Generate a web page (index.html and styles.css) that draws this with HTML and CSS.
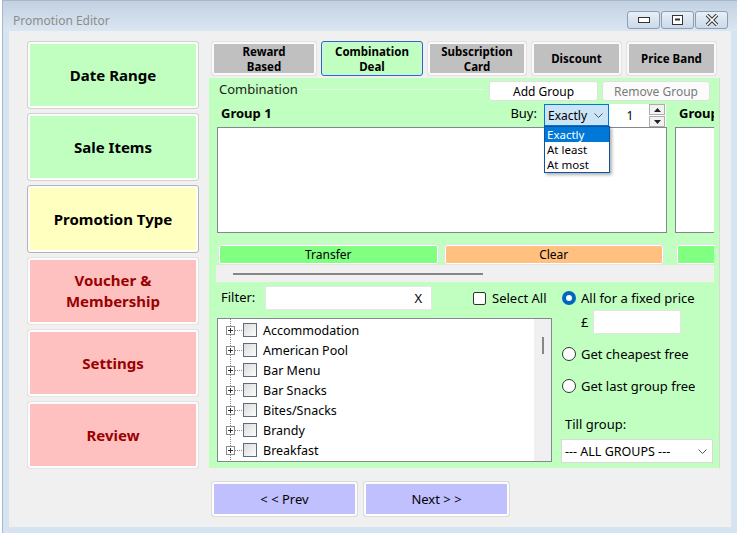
FILE: index.html
```html
<!DOCTYPE html>
<html lang="en">
  <head>
    <meta charset="UTF-8" />
    <meta name="viewport" content="width=device-width, initial-scale=1.0" />
    <title>Promotion Editor</title>
    <link rel="stylesheet" href="styles.css">
  </head>
  <body>
    <div class="window">
      <div class="titlebar">
        <span class="title">Promotion Editor</span>
        <div class="caption-btns">
          <span class="cap-btn">
            <svg width="12" height="6" viewBox="0 0 12 6"><rect x="0.5" y="0.5" width="11" height="5" fill="#fff" stroke="#333" /></svg>
          </span>
          <span class="cap-btn">
            <svg width="11" height="10" viewBox="0 0 11 10"><rect x="0.5" y="0.5" width="10" height="9" fill="#fff" stroke="#333" /><rect x="3" y="3.5" width="5" height="2" fill="#333" /></svg>
          </span>
          <span class="cap-btn">
            <svg width="14" height="12" viewBox="0 0 14 12">
              <path d="M2 1 L12 11 M12 1 L2 11" stroke="#333" stroke-width="3.6" />
              <path d="M2 1 L12 11 M12 1 L2 11" stroke="#fff" stroke-width="1.6" />
            </svg>
          </span>
        </div>
      </div>

      <div class="client">
        <nav class="steps">
          <div class="step green">Date Range</div>
          <div class="step green">Sale Items</div>
          <div class="step yellow current">Promotion Type</div>
          <div class="step pink">Voucher &amp;<br>Membership</div>
          <div class="step pink">Settings</div>
          <div class="step pink">Review</div>
        </nav>

        <div class="editor">
          <div class="tabs">
            <div class="tab w1">Reward<br>Based</div>
            <div class="tab w2 active">Combination<br>Deal</div>
            <div class="tab w3">Subscription<br>Card</div>
            <div class="tab w4">Discount</div>
            <div class="tab w5">Price Band</div>
          </div>

          <div class="panel">
            <div class="gb-head">
              <span class="legend">Combination</span>
              <span class="gb-line"></span>
              <span class="btn-white">Add Group</span>
              <span class="btn-white disabled">Remove Group</span>
            </div>

            <div class="groups">
              <div class="group">
                <div class="group-head">
                  <span class="group-name">Group 1</span>
                  <span class="buy">Buy:</span>
                  <div class="combo open">
                    <span>Exactly</span>
                    <svg width="9" height="5" viewBox="0 0 9 5"><path d="M0.5 0.5 L4.5 4.5 L8.5 0.5" fill="none" stroke="#555" /></svg>
                    <ul class="dropdown">
                      <li class="sel">Exactly</li>
                      <li>At least</li>
                      <li>At most</li>
                    </ul>
                  </div>
                  <div class="spin">
                    <span class="spin-val">1</span>
                    <span class="spin-btns">
                      <span class="arr"><svg width="7" height="4" viewBox="0 0 7 4"><path d="M0 4 L3.5 0 L7 4 Z" fill="#222" /></svg></span>
                      <span class="arr"><svg width="7" height="4" viewBox="0 0 7 4"><path d="M0 0 L3.5 4 L7 0 Z" fill="#222" /></svg></span>
                    </span>
                  </div>
                </div>
                <div class="group-box"></div>
                <div class="group-btns">
                  <span class="act transfer">Transfer</span>
                  <span class="act clear">Clear</span>
                </div>
              </div>

              <div class="group">
                <div class="group-head">
                  <span class="group-name">Group 2</span>
                </div>
                <div class="group-box"></div>
                <div class="group-btns">
                  <span class="act transfer">Transfer</span>
                  <span class="act clear">Clear</span>
                </div>
              </div>
            </div>

            <div class="hscroll"><span class="hthumb"></span></div>

            <div class="lower">
              <div class="items">
                <div class="filter-row">
                  <span class="filter-label">Filter:</span>
                  <div class="filter-input"><span>X</span></div>
                  <span class="check"></span>
                  <span class="check-label">Select All</span>
                </div>
                <div class="tree">
                  <ul class="tree-list">
                    <li><span class="plus"></span><span class="dots"></span><span class="check tree-check"></span>Accommodation</li>
                    <li><span class="plus"></span><span class="dots"></span><span class="check tree-check"></span>American Pool</li>
                    <li><span class="plus"></span><span class="dots"></span><span class="check tree-check"></span>Bar Menu</li>
                    <li><span class="plus"></span><span class="dots"></span><span class="check tree-check"></span>Bar Snacks</li>
                    <li><span class="plus"></span><span class="dots"></span><span class="check tree-check"></span>Bites/Snacks</li>
                    <li><span class="plus"></span><span class="dots"></span><span class="check tree-check"></span>Brandy</li>
                    <li><span class="plus"></span><span class="dots"></span><span class="check tree-check"></span>Breakfast</li>
                  </ul>
                  <div class="vscroll"><span class="vthumb"></span></div>
                </div>
              </div>

              <div class="options">
                <div class="radio-row">
                  <span class="radio on"></span>
                  <span>All for a fixed price</span>
                </div>
                <div class="price-row">
                  <span>£</span>
                  <span class="price-input"></span>
                </div>
                <div class="radio-row r2">
                  <span class="radio"></span>
                  <span>Get cheapest free</span>
                </div>
                <div class="radio-row r3">
                  <span class="radio"></span>
                  <span>Get last group free</span>
                </div>
                <div class="till-label">Till group:</div>
                <div class="till-select">
                  <span>--- ALL GROUPS ---</span>
                  <svg width="9" height="5" viewBox="0 0 9 5"><path d="M0.5 0.5 L4.5 4.5 L8.5 0.5" fill="none" stroke="#555" /></svg>
                </div>
              </div>
            </div>
          </div>

          <div class="pager">
            <span class="page-btn">&lt; &lt; Prev</span>
            <span class="page-btn">Next &gt; &gt;</span>
          </div>
        </div>
      </div>
    </div>
  </body>
</html>
```

FILE: styles.css
```css
body {
  margin: 0;
  background-color: #ffffff;
  font-family: "Noto Sans", "Open Sans", sans-serif;
  font-size: 12px;
  color: #000;
}
.window {
  margin: 0 0 0 2px;
  width: 735px;
  height: 533px;
  box-sizing: border-box;
  border: 1px solid #a9b8c9;
  border-right: none;
  border-bottom: none;
  background-color: #d6e3f1;
  padding: 0 6px 6px 6px;
}
.titlebar {
  height: 30px;
  display: flex;
  align-items: flex-start;
  background: linear-gradient(#c2d1e1, #dbe6f2);
  margin: 0 -6px;
  padding: 0 9px 0 10px;
}
.title {
  margin-top: 11px;
  color: #8c8c8c;
  font-size: 12px;
  flex: 1;
}
.caption-btns {
  display: flex;
  margin-top: 10px;
}
.cap-btn {
  width: 31px;
  height: 16px;
  border: 1px solid #8a9fb6;
  border-radius: 3px;
  background: linear-gradient(#e9f0f7, #cbd9e8);
  display: flex;
  align-items: center;
  justify-content: center;
  margin-left: 1px;
}
.client {
  height: 496px;
  box-sizing: border-box;
  background-color: #f0f0f0;
  display: flex;
  padding: 10px 10px 0 18px;
  gap: 10px;
}

/* steps on the left */
.steps {
  width: 172px;
  display: flex;
  flex-direction: column;
  gap: 4px;
}
.step {
  height: 68px;
  box-sizing: border-box;
  border: 1px solid #e4e4e4;
  border-radius: 3px;
  box-shadow: inset 0 0 0 2px #fdfdfd;
  display: flex;
  align-items: center;
  justify-content: center;
  text-align: center;
  font-weight: bold;
  font-size: 15px;
  line-height: 21px;
}
.step.green {
  background-color: #c0ffc0;
  border-color: #d2d2d2;
}
.step.yellow {
  background-color: #ffffc0;
  border-color: #b4b4b4;
}
.step.pink {
  background-color: #ffc0c0;
  color: #9a0000;
}

/* editor */
.editor {
  width: 511px;
  display: flex;
  flex-direction: column;
}
.tabs {
  display: flex;
  gap: 4px;
  padding-left: 2px;
  height: 35px;
}
.tab {
  box-sizing: border-box;
  height: 35px;
  border: 1px solid #e2e2e2;
  border-radius: 3px;
  box-shadow: inset 0 0 0 2px #fafafa;
  background-color: #c0c0c0;
  display: flex;
  align-items: center;
  justify-content: center;
  text-align: center;
  font-weight: bold;
  font-size: 11.5px;
  line-height: 15px;
}
.tab.w1 { width: 106px; }
.tab.w2 { width: 102px; }
.tab.w3 { width: 100px; }
.tab.w4 { width: 91px; }
.tab.w5 { width: 91px; }
.tab.active {
  background-color: #c0ffc0;
  border-color: #2b6cb0;
  box-shadow: inset 0 0 0 1px #d7ecfa;
}
.panel {
  margin-top: 2px;
  height: 390px;
  box-sizing: border-box;
  background-color: #c0ffc0;
  border-right: 1px solid #d4dcd4;
  padding-top: 3px;
  position: relative;
}
.gb-head {
  display: flex;
  align-items: flex-start;
  height: 20px;
  padding: 0 9px 0 10px;
}
.legend {
  font-size: 13px;
  line-height: 16px;
  color: #222;
}
.gb-line {
  flex: 1;
  border-top: 1px solid #e6f8e6;
  margin: 8px 6px 0 5px;
}
.btn-white {
  box-sizing: border-box;
  height: 20px;
  width: 109px;
  background: #fff;
  border: 1px solid #e0e0e0;
  border-radius: 3px;
  display: flex;
  align-items: center;
  justify-content: center;
  font-size: 12px;
}
.btn-white + .btn-white {
  margin-left: 4px;
  width: 108px;
}
.btn-white.disabled {
  color: #7a7a7a;
  background: #fbfbfb;
}

.groups {
  margin: 3px 0 0 7px;
  width: 498px;
  display: flex;
  gap: 8px;
  padding-left: 1px;
  box-sizing: border-box;
  overflow: hidden;
}
.group {
  flex: 0 0 450px;
}
.group-head {
  height: 23px;
  display: flex;
  align-items: flex-start;
}
.group-name {
  font-weight: bold;
  font-size: 13px;
  line-height: 18px;
  margin: 0 0 0 4px;
  flex: 1;
}
.buy {
  font-size: 13px;
  margin: 0 7px 0 0;
}
.combo {
  position: relative;
  box-sizing: border-box;
  width: 65px;
  height: 22px;
  border: 1px solid #0078d7;
  background-color: #cce4f7;
  display: flex;
  align-items: center;
  justify-content: space-between;
  padding: 0 5px 0 3px;
}
.combo span {
  font-size: 12px;
}
.dropdown {
  position: absolute;
  top: 21px;
  left: -1px;
  width: 66px;
  box-sizing: border-box;
  margin: 0;
  padding: 0;
  list-style: none;
  background: #fff;
  border: 1px solid #0f52a0;
  box-shadow: 2px 2px 3px rgba(0, 0, 0, 0.3);
  z-index: 5;
}
.dropdown li {
  height: 15px;
  line-height: 15px;
  padding-left: 2px;
  font-size: 11.5px;
  overflow: hidden;
}
.dropdown li.sel {
  background-color: #0078d7;
  color: #fff;
}
.spin {
  box-sizing: border-box;
  width: 57px;
  height: 23px;
  background: #fff;
  display: flex;
  align-items: center;
  margin-right: 1px;
}
.spin-val {
  flex: 1;
  text-align: center;
  font-size: 12px;
  padding-left: 2px;
}
.spin-btns {
  display: flex;
  flex-direction: column;
  gap: 1px;
  margin-right: 1px;
}
.arr {
  width: 14px;
  height: 9px;
  border: 1px solid #adadad;
  background: #f2f2f2;
  display: flex;
  align-items: center;
  justify-content: center;
}
.group-box {
  height: 106px;
  box-sizing: border-box;
  border: 1px solid #828790;
  background: #fff;
}
.group-btns {
  display: flex;
  gap: 5px;
  margin-top: 11px;
  padding-left: 1px;
  padding-right: 3px;
}
.act {
  flex: 1;
  box-sizing: border-box;
  height: 21px;
  border: 1px solid #e4e4e4;
  border-radius: 3px;
  box-shadow: inset 0 0 0 1px #fff;
  display: flex;
  align-items: center;
  justify-content: center;
  font-size: 12px;
}
.act.transfer {
  background-color: #80ff80;
}
.act.clear {
  background-color: #ffc080;
}
.hscroll {
  margin-left: 7px;
  width: 498px;
  height: 17px;
  background: #f0f0f0;
  display: flex;
  align-items: center;
}
.hthumb {
  display: block;
  margin-left: 17px;
  width: 250px;
  height: 2px;
  background: #868686;
}

.lower {
  display: flex;
  padding-left: 8px;
  margin-top: 4px;
}
.items {
  flex: 0 0 335px;
}
.filter-row {
  display: flex;
  align-items: center;
  height: 24px;
}
.filter-label {
  font-size: 13px;
  margin: -2px 0 0 4px;
  width: 44px;
}
.filter-input {
  width: 167px;
  height: 24px;
  box-sizing: border-box;
  background: #fff;
  border: 1px solid #e6e6e6;
  display: flex;
  align-items: center;
  justify-content: flex-end;
  padding-right: 9px;
  font-size: 13px;
}
.check {
  display: inline-block;
  width: 13px;
  height: 13px;
  box-sizing: border-box;
  border: 1px solid #333;
  border-radius: 2px;
  background: #fff;
}
.filter-row .check {
  margin-left: 41px;
}
.check-label {
  margin-left: 6px;
  font-size: 13px;
}
.tree {
  margin-top: 8px;
  height: 144px;
  box-sizing: border-box;
  border: 1px solid #828790;
  background: #fff;
  display: flex;
  overflow: hidden;
}
.tree-list {
  list-style: none;
  margin: 0;
  padding: 1px 0 0 8px;
  flex: 1;
  background-image: linear-gradient(#888 50%, transparent 50%);
  background-size: 1px 2px;
  background-repeat: repeat-y;
  background-position: 12px 0;
}
.tree-list li {
  height: 20px;
  display: flex;
  align-items: center;
  font-size: 12.5px;
}
.plus {
  width: 9px;
  height: 9px;
  box-sizing: border-box;
  border: 1px solid #8c8c8c;
  background: #fff;
  position: relative;
}
.plus::before {
  content: "";
  position: absolute;
  left: 1px;
  top: 3px;
  width: 5px;
  height: 1px;
  background: #333;
}
.plus::after {
  content: "";
  position: absolute;
  left: 3px;
  top: 1px;
  width: 1px;
  height: 5px;
  background: #333;
}
.dots {
  width: 8px;
  height: 1px;
  background-image: linear-gradient(90deg, #888 50%, transparent 50%);
  background-size: 2px 1px;
}
.tree-check {
  width: 14px;
  height: 14px;
  border: 1px solid #5b6b80;
  border-radius: 0;
  background: linear-gradient(135deg, #dcdcdc, #fbfbfb);
  margin-right: 6px;
}
.vscroll {
  width: 17px;
  background: #f0f0f0;
  display: flex;
  justify-content: center;
}
.vthumb {
  display: block;
  width: 2px;
  height: 17px;
  margin-top: 18px;
  background: #868686;
}

.options {
  margin-left: 9px;
  flex: 0 0 152px;
  font-size: 13px;
}
.radio-row {
  display: flex;
  align-items: center;
  height: 18px;
  margin-top: 3px;
}
.radio {
  width: 14px;
  height: 14px;
  box-sizing: border-box;
  border: 1px solid #333;
  border-radius: 50%;
  background: #fff;
  margin: 0 5px 0 1px;
}
.radio.on {
  border: 4px solid #0067c0;
  background: #fff;
}
.price-row {
  display: flex;
  align-items: center;
  margin: 3px 0 0 20px;
  gap: 5px;
}
.price-input {
  width: 88px;
  height: 24px;
  box-sizing: border-box;
  border: 1px solid #e4e4e4;
  background: #fff;
}
.radio-row.r2 {
  margin-top: 11px;
}
.radio-row.r3 {
  margin-top: 14px;
}
.till-label {
  margin: 20px 0 0 4px;
  height: 18px;
}
.till-select {
  margin-top: 6px;
  height: 24px;
  box-sizing: border-box;
  border: 1px solid #d9d9d9;
  background: #fff;
  display: flex;
  align-items: center;
  justify-content: space-between;
  padding: 0 5px 0 3px;
  font-size: 12.5px;
}

.pager {
  display: flex;
  gap: 5px;
  margin: 13px 0 0 2px;
}
.page-btn {
  width: 147px;
  height: 36px;
  box-sizing: border-box;
  border: 1px solid #dcdcdc;
  border-radius: 3px;
  box-shadow: inset 0 0 0 2px #fdfdfd;
  background-color: #c0c0ff;
  display: flex;
  align-items: center;
  justify-content: center;
  font-size: 13px;
}
```
